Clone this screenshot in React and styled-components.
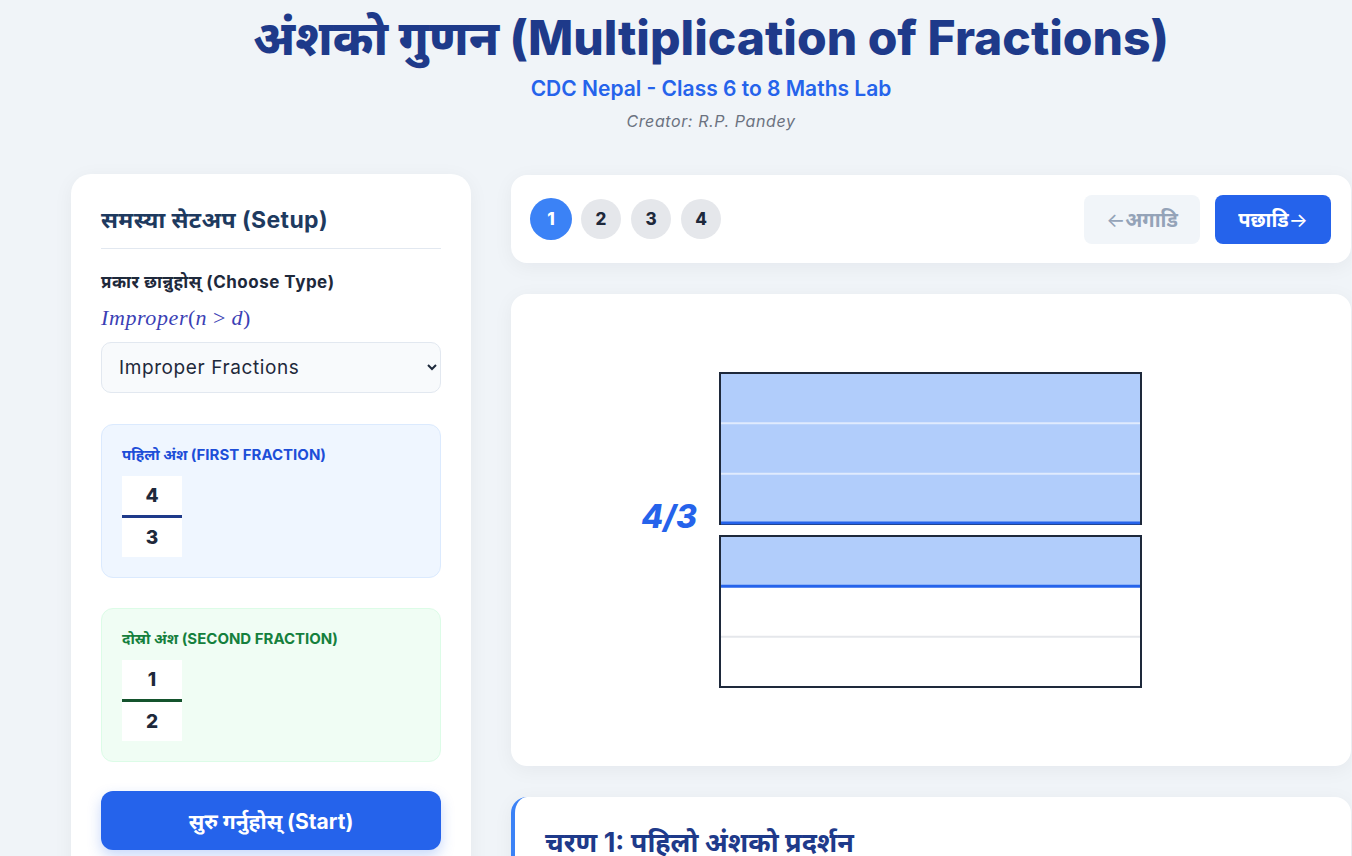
import React from 'react'
import styled, { createGlobalStyle } from 'styled-components'

const GlobalStyle = createGlobalStyle`
  body {
    margin: 0;
    background: #f0f4f8;
    font-family: Inter, "Noto Sans", "Noto Sans Devanagari", sans-serif;
    color: #1e293b;
    overflow: hidden;
  }
`

const Page = styled.div`
  width: 1280px;
  margin-left: 71px;
`

const Header = styled.header`
  text-align: center;
  padding-top: 8px;
  height: 174px;
  box-sizing: border-box;
`

const Title = styled.h1`
  margin: 0;
  font-size: 48px;
  line-height: 60px;
  font-weight: 800;
  color: #1e3a8a;
`

const Subtitle = styled.div`
  margin-top: 9px;
  font-size: 21px;
  line-height: 24px;
  font-weight: 600;
  color: #2563eb;
`

const Creator = styled.div`
  margin-top: 10px;
  font-size: 16px;
  line-height: 20px;
  font-style: italic;
  letter-spacing: 0.6px;
  color: #6b7280;
`

const Layout = styled.main`
  display: grid;
  grid-template-columns: 400px 1fr;
  gap: 40px;
  align-items: start;
`

const Card = styled.section`
  background: #fff;
  border-radius: 20px;
  box-shadow: 0 4px 20px rgba(15, 23, 42, 0.05);
`

const SetupCard = styled(Card)`
  padding: 30px;
  height: 720px;
`

const CardTitle = styled.h2`
  margin: 0;
  font-size: 23px;
  line-height: 32px;
  font-weight: 700;
  letter-spacing: 0.4px;
  color: #1e3a5f;
  padding-bottom: 12px;
  border-bottom: 1px solid #e2e8f0;
`

const Label = styled.div`
  margin-top: 21px;
  font-size: 17px;
  line-height: 24px;
  font-weight: 700;
  letter-spacing: 0.5px;
  color: #1e293b;
`

const MathLine = styled.div`
  margin-top: 12px;
  font-family: "Liberation Serif", "DejaVu Serif", serif;
  font-size: 22px;
  line-height: 24px;
  color: #3b3fb5;
  i { font-style: italic; letter-spacing: 0.6px; }
`

const Rel = styled.span`
  margin: 0 6px;
`

const Select = styled.select`
  display: block;
  width: 100%;
  margin-top: 12px;
  height: 51px;
  padding: 0 10px 0 13px;
  border: 1px solid #e2e8f0;
  border-radius: 10px;
  background: #f8fafc;
  font-family: Inter, "Noto Sans", sans-serif;
  font-size: 19px;
  letter-spacing: 0.6px;
  color: #1e293b;
`

const FractionBox = styled.div`
  margin-top: ${p => p.$gap}px;
  padding: 20px;
  border-radius: 12px;
  background: ${p => p.$bg};
  border: 1px solid ${p => p.$border};
`

const BoxLabel = styled.div`
  font-size: 15px;
  line-height: 20px;
  font-weight: 700;
  color: ${p => p.$color};
  text-transform: uppercase;
  margin-bottom: 11px;
`

const FractionInput = styled.div`
  width: 60px;
  display: flex;
  flex-direction: column;
`

const Digit = styled.div`
  height: 39px;
  background: #fff;
  display: flex;
  align-items: center;
  justify-content: center;
  font-size: 19px;
  font-weight: 800;
  color: #1e293b;
`

const Bar = styled.div`
  height: 3px;
  background: ${p => p.$color};
`

const StartButton = styled.button`
  display: block;
  width: 100%;
  margin-top: 29px;
  height: 59px;
  border: none;
  border-radius: 12px;
  background: #2563eb;
  color: #fff;
  font-family: inherit;
  font-size: 21px;
  font-weight: 700;
  box-shadow: 0 6px 14px rgba(37, 99, 235, 0.25);
`

const RightColumn = styled.div`
  display: flex;
  flex-direction: column;
  gap: 31px;
  padding-top: 1px;
`

const NavCard = styled(Card)`
  height: 88px;
  padding: 0 20px 0 19px;
  border-radius: 16px;
  display: flex;
  align-items: center;
  justify-content: space-between;
  box-sizing: border-box;
`

const Steps = styled.div`
  display: flex;
  align-items: center;
  gap: 9px;
`

const StepDot = styled.div`
  width: ${p => (p.$active ? 42 : 40)}px;
  height: ${p => (p.$active ? 42 : 40)}px;
  border-radius: 50%;
  background: ${p => (p.$active ? '#3b82f6' : '#e5e7eb')};
  color: ${p => (p.$active ? '#fff' : '#1e293b')};
  display: flex;
  align-items: center;
  justify-content: center;
  font-size: 17px;
  font-weight: 800;
  margin-right: ${p => (p.$active ? 0 : 1)}px;
`

const NavButtons = styled.div`
  display: flex;
  gap: 15px;
`

const NavButton = styled.button`
  height: 49px;
  min-width: 116px;
  padding: 0 16px;
  border: none;
  border-radius: 8px;
  font-family: inherit;
  font-size: 20px;
  font-weight: 700;
  background: ${p => (p.$primary ? '#2563eb' : '#f1f5f9')};
  color: ${p => (p.$primary ? '#fff' : '#94a3b8')};
`

const Arrow = styled.span`
  font-weight: 400;
`

const VisualCard = styled(Card)`
  height: 472px;
  border-radius: 16px;
  display: flex;
  align-items: center;
  justify-content: center;
`

const StepCard = styled(Card)`
  border-radius: 16px;
  border-left: 4px solid #3b82f6;
  padding: 30px;
  height: 200px;
`

const StepTitle = styled.h3`
  margin: 0;
  font-size: 27px;
  line-height: 32px;
  font-weight: 700;
  color: #1e3a8a;
`

function FractionModel() {
  const x = 99
  const w = 421
  const h = 151
  const part = h / 3
  return (
    <svg width="620" height="340" viewBox="0 0 620 340">
      <text x="76" y="168" textAnchor="end" fontFamily="Inter, 'Noto Sans', sans-serif"
        fontSize="32" fontWeight="800" fontStyle="italic" fill="#2563eb">4/3</text>

      <rect x={x} y={13} width={w} height={h} fill="#b1cdfb" stroke="#1e293b" strokeWidth="2" />
      <line x1={x + 1} x2={x + w - 1} y1={13 + part} y2={13 + part} stroke="#fff" strokeOpacity="0.6" strokeWidth="2" />
      <line x1={x + 1} x2={x + w - 1} y1={13 + part * 2} y2={13 + part * 2} stroke="#fff" strokeOpacity="0.6" strokeWidth="2" />
      <line x1={x + 1} x2={x + w - 1} y1={13 + h - 1} y2={13 + h - 1} stroke="#2563eb" strokeWidth="3" />

      <rect x={x} y={176} width={w} height={h} fill="#fff" stroke="#1e293b" strokeWidth="2" />
      <rect x={x + 1} y={177} width={w - 2} height={part - 1} fill="#b1cdfb" />
      <line x1={x + 1} x2={x + w - 1} y1={176 + part} y2={176 + part} stroke="#2563eb" strokeWidth="3" />
      <line x1={x + 1} x2={x + w - 1} y1={176 + part * 2} y2={176 + part * 2} stroke="#e5e7eb" strokeWidth="2" />
    </svg>
  )
}

export default function App() {
  return (
    <Page>
      <GlobalStyle />
      <Header>
        <Title>अंशको गुणन (Multiplication of Fractions)</Title>
        <Subtitle>CDC Nepal - Class 6 to 8 Maths Lab</Subtitle>
        <Creator>Creator: R.P. Pandey</Creator>
      </Header>

      <Layout>
        <SetupCard>
          <CardTitle>समस्या सेटअप (Setup)</CardTitle>
          <Label>प्रकार छान्नुहोस् (Choose Type)</Label>
          <MathLine><i>Improper</i>(<i>n</i><Rel>&gt;</Rel><i>d</i>)</MathLine>
          <Select defaultValue="improper">
            <option value="proper">Proper Fractions</option>
            <option value="improper">Improper Fractions</option>
            <option value="mixed">Mixed Fractions</option>
          </Select>

          <FractionBox $gap={31} $bg="#eff6ff" $border="#dbeafe">
            <BoxLabel $color="#1d4ed8">पहिलो अंश (First Fraction)</BoxLabel>
            <FractionInput>
              <Digit>4</Digit>
              <Bar $color="#1e3a8a" />
              <Digit>3</Digit>
            </FractionInput>
          </FractionBox>

          <FractionBox $gap={30} $bg="#f0fdf4" $border="#dcfce7">
            <BoxLabel $color="#15803d">दोस्रो अंश (Second Fraction)</BoxLabel>
            <FractionInput>
              <Digit>1</Digit>
              <Bar $color="#14532d" />
              <Digit>2</Digit>
            </FractionInput>
          </FractionBox>

          <StartButton>सुरु गर्नुहोस् (Start)</StartButton>
        </SetupCard>

        <RightColumn>
          <NavCard>
            <Steps>
              {[1, 2, 3, 4].map(n => (
                <StepDot key={n} $active={n === 1}>{n}</StepDot>
              ))}
            </Steps>
            <NavButtons>
              <NavButton><Arrow>←</Arrow>अगाडि</NavButton>
              <NavButton $primary>पछाडि<Arrow>→</Arrow></NavButton>
            </NavButtons>
          </NavCard>

          <VisualCard>
            <FractionModel />
          </VisualCard>

          <StepCard>
            <StepTitle>चरण 1: पहिलो अंशको प्रदर्शन</StepTitle>
          </StepCard>
        </RightColumn>
      </Layout>
    </Page>
  )
}
